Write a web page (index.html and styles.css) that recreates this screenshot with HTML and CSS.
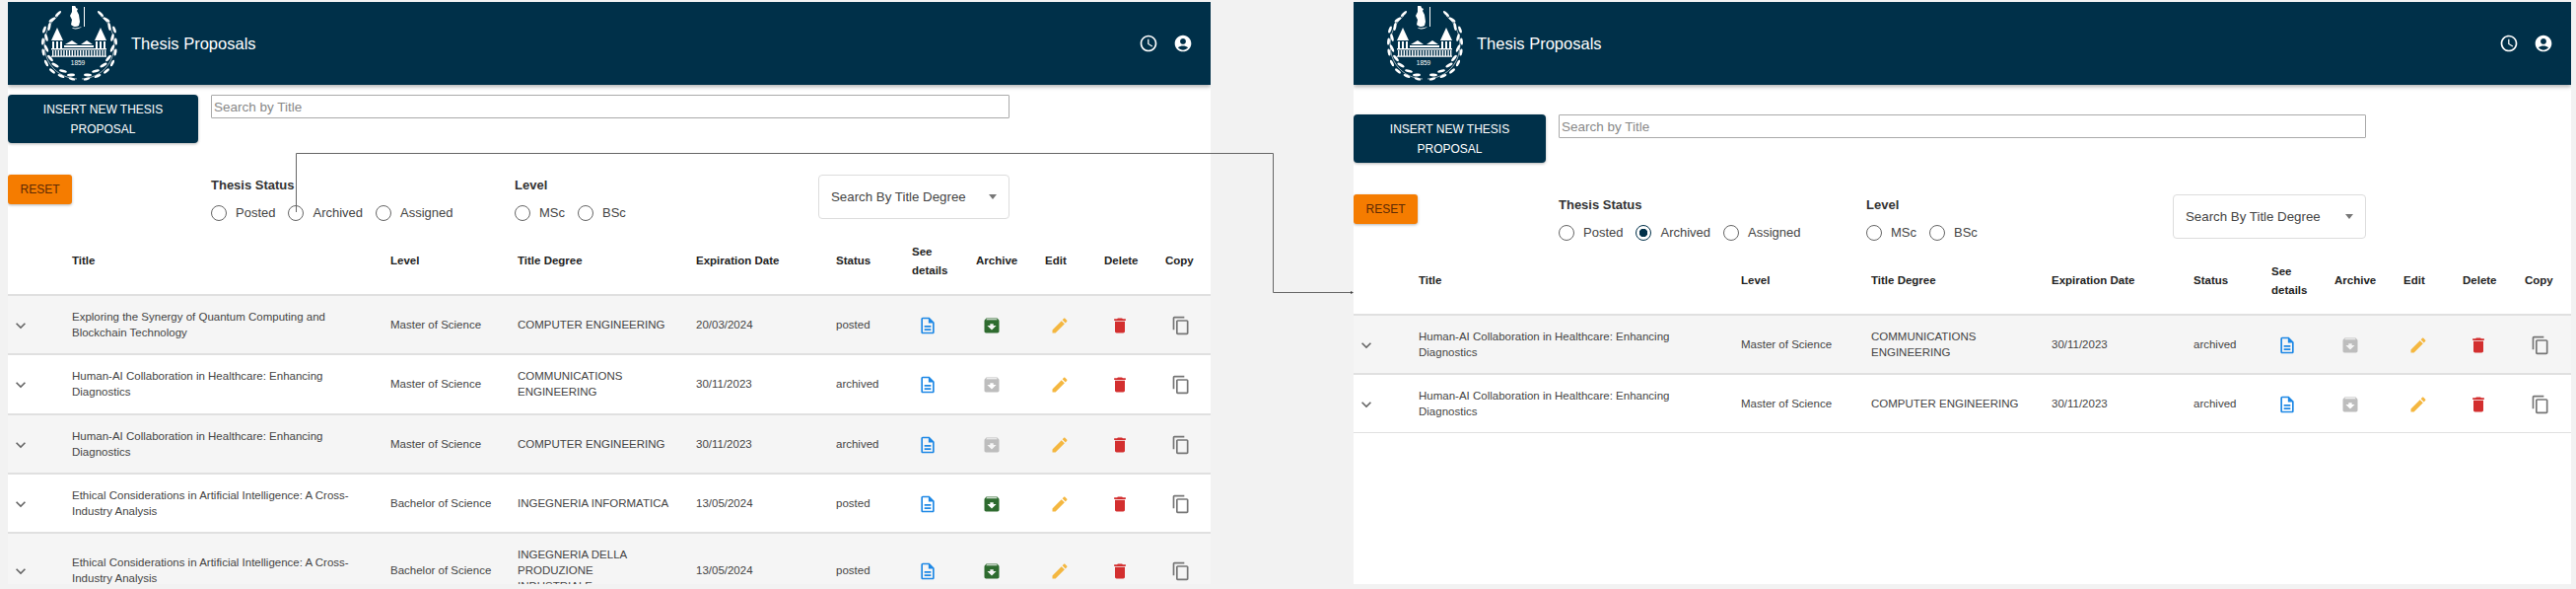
FILE: index.html
```html
<!DOCTYPE html>
<html>
<head lang="en">
    <meta charset="UTF-8">
    <title>Thesis Proposals</title>
    <link rel="stylesheet" href="styles.css">
</head>
<body>
<svg class="sprite" xmlns="http://www.w3.org/2000/svg">
    <symbol id="i-clock" viewBox="0 0 24 24"><path d="M11.99 2C6.47 2 2 6.48 2 12s4.47 10 9.99 10C17.52 22 22 17.52 22 12S17.52 2 11.99 2zM12 20c-4.42 0-8-3.58-8-8s3.58-8 8-8 8 3.58 8 8-3.58 8-8 8zm.5-13H11v6l5.25 3.15.75-1.23-4.5-2.67z"/></symbol>
    <symbol id="i-user" viewBox="0 0 24 24"><path d="M12 2C6.48 2 2 6.48 2 12s4.48 10 10 10 10-4.48 10-10S17.52 2 12 2zm0 4c1.93 0 3.5 1.57 3.5 3.5S13.93 13 12 13s-3.5-1.57-3.5-3.5S10.07 6 12 6zm0 14c-2.03 0-4.43-.82-6.14-2.88C7.55 15.8 9.68 15 12 15s4.45.8 6.14 2.12C16.43 19.18 14.03 20 12 20z"/></symbol>
    <symbol id="i-more" viewBox="0 0 24 24"><path d="M16.59 8.59 12 13.17 7.41 8.59 6 10l6 6 6-6z"/></symbol>
    <symbol id="i-file" viewBox="0 0 24 24"><path d="M8 16h8v2H8zm0-4h8v2H8zm6-10H6c-1.1 0-2 .9-2 2v16c0 1.1.89 2 1.99 2H18c1.1 0 2-.9 2-2V8l-6-6zm4 18H6V4h7v5h5v11z"/></symbol>
    <symbol id="i-archive" viewBox="0 0 24 24"><path d="M20.54 5.23l-1.39-1.68C18.88 3.21 18.47 3 18 3H6c-.47 0-.88.21-1.16.55L3.46 5.23C3.17 5.57 3 6.02 3 6.5V19c0 1.1.9 2 2 2h14c1.1 0 2-.9 2-2V6.5c0-.48-.17-.93-.46-1.27zM12 17.5L6.5 12H10v-2h4v2h3.5L12 17.5zM5.12 5l.81-1h12l.94 1H5.12z"/></symbol>
    <symbol id="i-edit" viewBox="0 0 24 24"><path d="M3 17.25V21h3.75L17.81 9.94l-3.75-3.75L3 17.25zM20.71 7.04c.39-.39.39-1.02 0-1.41l-2.34-2.34c-.39-.39-1.02-.39-1.41 0l-1.83 1.83 3.75 3.75 1.83-1.83z"/></symbol>
    <symbol id="i-delete" viewBox="0 0 24 24"><path d="M6 19c0 1.1.9 2 2 2h8c1.1 0 2-.9 2-2V7H6v12zM19 4h-3.5l-1-1h-5l-1 1H5v2h14V4z"/></symbol>
    <symbol id="i-copy" viewBox="0 0 24 24"><path d="M16 1H4c-1.1 0-2 .9-2 2v14h2V3h12V1zm3 4H8c-1.1 0-2 .9-2 2v14c0 1.1.9 2 2 2h11c1.1 0 2-.9 2-2V7c0-1.1-.9-2-2-2zm0 16H8V7h11v14z"/></symbol>
    <symbol id="i-logo" viewBox="0 0 80 76">
        <g id="wreath-side">
            <path class="logo-stem" d="M19 10C6 20 1 40 9 56c6 11 16 17 29 18"/>
            <ellipse cx="19" cy="8" rx="4" ry="1.3" transform="rotate(-45 19 8)"/>
            <ellipse cx="13" cy="14" rx="4" ry="1.4" transform="rotate(-35 13 14)"/>
            <ellipse cx="10" cy="21" rx="4" ry="1.4" transform="rotate(-80 10 21)"/>
            <ellipse cx="5" cy="24" rx="3.6" ry="1.4" transform="rotate(-70 5 24)"/>
            <ellipse cx="7" cy="32" rx="4" ry="1.4" transform="rotate(75 7 32)"/>
            <ellipse cx="3.500" cy="36" rx="3.6" ry="1.4" transform="rotate(-85 3.500 36)"/>
            <ellipse cx="7" cy="43" rx="4" ry="1.4" transform="rotate(65 7 43)"/>
            <ellipse cx="4" cy="47" rx="3.6" ry="1.4" transform="rotate(80 4 47)"/>
            <ellipse cx="11" cy="53" rx="4" ry="1.4" transform="rotate(50 11 53)"/>
            <ellipse cx="7" cy="58" rx="3.6" ry="1.4" transform="rotate(65 7 58)"/>
            <ellipse cx="16" cy="60" rx="4" ry="1.4" transform="rotate(30 16 60)"/>
            <ellipse cx="13" cy="66" rx="3.6" ry="1.4" transform="rotate(40 13 66)"/>
            <ellipse cx="24" cy="66" rx="4" ry="1.4" transform="rotate(15 24 66)"/>
            <ellipse cx="22" cy="71" rx="3.6" ry="1.4" transform="rotate(25 22 71)"/>
            <ellipse cx="32" cy="70" rx="4" ry="1.4" transform="rotate(-5 32 70)"/>
            <ellipse cx="33" cy="74" rx="3.4" ry="1.3" transform="rotate(15 33 74)"/>
        </g>
        <use href="#wreath-side" transform="translate(81 0) scale(-1 1)"/>
        <path d="M33 0c2-1 4 0 4 2l2 1-1 2 2 4 1 7-1 4c-3 2-6 1-8-1l1-5-2-4 2-4z"/>
        <path d="M45 1h1v20h-1zM43 21c-2 2-6 3-9 2l-1-1c4 1 7 0 10-1z"/>
        <path d="M18 22l6 13H12zM62 22l6 13H56z"/>
        <path d="M13 36h2v7h-2zM17 36h2v7h-2zM21 36h2v7h-2zM57 36h2v7h-2zM61 36h2v7h-2zM65 36h2v7h-2z"/>
        <path d="M26 39l7-4 6 4zM42 39l6-4 6 4zM25 40h30v2H25z"/>
        <path d="M12 43h56v1.500H12zM13 45h1.400v6H13zM15.800 45h1.400v6h-1.400zM18.600 45h1.400v6h-1.400zM21.400 45h1.400v6h-1.400zM24.200 45h1.400v6h-1.400zM27 45h1.400v6H27zM29.800 45h1.400v6h-1.400zM32.600 45h1.400v6h-1.400zM35.400 45h1.400v6h-1.400zM38.200 45h1.400v6h-1.400zM41 45h1.400v6H41zM43.800 45h1.400v6h-1.400zM46.600 45h1.400v6h-1.400zM49.400 45h1.400v6h-1.400zM52.200 45h1.400v6h-1.400zM55 45h1.400v6H55zM57.800 45h1.400v6h-1.400zM60.600 45h1.400v6h-1.400zM63.400 45h1.400v6h-1.400zM66 45h1.400v6H66zM12 50.500h56v1.200H12z"/>
        <text class="logo-year" x="39" y="60" text-anchor="middle">1859</text>
    </symbol>
</svg>

<div class="panel panel-left">
    <header class="topbar">
        <svg class="logo"><use href="#i-logo"/></svg>
        <span class="topbar-title">Thesis Proposals</span>
        <svg class="topbar-icon"><use href="#i-clock"/></svg>
        <svg class="topbar-icon"><use href="#i-user"/></svg>
    </header>

    <div class="tools">
        <button class="btn-insert">Insert new thesis proposal</button>
        <input class="search" type="text" placeholder="Search by Title">
    </div>

    <div class="tools filters">
        <button class="btn-reset">Reset</button>
        <div class="filter-row">
            <div>
                <div class="filter-title">Thesis Status</div>
                <div class="radios">
                    <label><input type="radio" name="status1">Posted</label>
                    <label><input type="radio" name="status1">Archived</label>
                    <label><input type="radio" name="status1">Assigned</label>
                </div>
            </div>
            <div>
                <div class="filter-title">Level</div>
                <div class="radios">
                    <label><input type="radio" name="level1">MSc</label>
                    <label><input type="radio" name="level1">BSc</label>
                </div>
            </div>
            <div class="select">Search By Title Degree<span class="select-arrow"></span></div>
        </div>
    </div>

    <table class="list">
        <colgroup><col><col><col><col><col><col><col><col><col><col><col></colgroup>
        <thead>
        <tr><th></th><th>Title</th><th>Level</th><th>Title Degree</th><th>Expiration Date</th><th>Status</th><th>See<br>details</th><th>Archive</th><th>Edit</th><th>Delete</th><th>Copy</th></tr>
        </thead>
        <tbody>
        <tr>
            <td><svg class="ico more"><use href="#i-more"/></svg></td>
            <td>Exploring the Synergy of Quantum Computing and Blockchain Technology</td>
            <td>Master of Science</td><td>COMPUTER ENGINEERING</td><td>20/03/2024</td><td>posted</td>
            <td><svg class="ico file"><use href="#i-file"/></svg></td>
            <td><svg class="ico arch"><use href="#i-archive"/></svg></td>
            <td><svg class="ico edit"><use href="#i-edit"/></svg></td>
            <td><svg class="ico del"><use href="#i-delete"/></svg></td>
            <td><svg class="ico copy"><use href="#i-copy"/></svg></td>
        </tr>
        <tr>
            <td><svg class="ico more"><use href="#i-more"/></svg></td>
            <td>Human-AI Collaboration in Healthcare: Enhancing Diagnostics</td>
            <td>Master of Science</td><td>COMMUNICATIONS ENGINEERING</td><td>30/11/2023</td><td>archived</td>
            <td><svg class="ico file"><use href="#i-file"/></svg></td>
            <td><svg class="ico arch off"><use href="#i-archive"/></svg></td>
            <td><svg class="ico edit"><use href="#i-edit"/></svg></td>
            <td><svg class="ico del"><use href="#i-delete"/></svg></td>
            <td><svg class="ico copy"><use href="#i-copy"/></svg></td>
        </tr>
        <tr>
            <td><svg class="ico more"><use href="#i-more"/></svg></td>
            <td>Human-AI Collaboration in Healthcare: Enhancing Diagnostics</td>
            <td>Master of Science</td><td>COMPUTER ENGINEERING</td><td>30/11/2023</td><td>archived</td>
            <td><svg class="ico file"><use href="#i-file"/></svg></td>
            <td><svg class="ico arch off"><use href="#i-archive"/></svg></td>
            <td><svg class="ico edit"><use href="#i-edit"/></svg></td>
            <td><svg class="ico del"><use href="#i-delete"/></svg></td>
            <td><svg class="ico copy"><use href="#i-copy"/></svg></td>
        </tr>
        <tr>
            <td><svg class="ico more"><use href="#i-more"/></svg></td>
            <td>Ethical Considerations in Artificial Intelligence: A Cross-Industry Analysis</td>
            <td>Bachelor of Science</td><td>INGEGNERIA INFORMATICA</td><td>13/05/2024</td><td>posted</td>
            <td><svg class="ico file"><use href="#i-file"/></svg></td>
            <td><svg class="ico arch"><use href="#i-archive"/></svg></td>
            <td><svg class="ico edit"><use href="#i-edit"/></svg></td>
            <td><svg class="ico del"><use href="#i-delete"/></svg></td>
            <td><svg class="ico copy"><use href="#i-copy"/></svg></td>
        </tr>
        <tr>
            <td><svg class="ico more"><use href="#i-more"/></svg></td>
            <td>Ethical Considerations in Artificial Intelligence: A Cross-Industry Analysis</td>
            <td>Bachelor of Science</td><td>INGEGNERIA DELLA PRODUZIONE INDUSTRIALE</td><td>13/05/2024</td><td>posted</td>
            <td><svg class="ico file"><use href="#i-file"/></svg></td>
            <td><svg class="ico arch"><use href="#i-archive"/></svg></td>
            <td><svg class="ico edit"><use href="#i-edit"/></svg></td>
            <td><svg class="ico del"><use href="#i-delete"/></svg></td>
            <td><svg class="ico copy"><use href="#i-copy"/></svg></td>
        </tr>
        </tbody>
    </table>
</div>

<div class="panel panel-right">
    <header class="topbar">
        <svg class="logo"><use href="#i-logo"/></svg>
        <span class="topbar-title">Thesis Proposals</span>
        <svg class="topbar-icon"><use href="#i-clock"/></svg>
        <svg class="topbar-icon"><use href="#i-user"/></svg>
    </header>

    <div class="tools">
        <button class="btn-insert">Insert new thesis proposal</button>
        <input class="search" type="text" placeholder="Search by Title">
    </div>

    <div class="tools filters">
        <button class="btn-reset">Reset</button>
        <div class="filter-row">
            <div>
                <div class="filter-title">Thesis Status</div>
                <div class="radios">
                    <label><input type="radio" name="status2">Posted</label>
                    <label><input type="radio" name="status2" checked>Archived</label>
                    <label><input type="radio" name="status2">Assigned</label>
                </div>
            </div>
            <div>
                <div class="filter-title">Level</div>
                <div class="radios">
                    <label><input type="radio" name="level2">MSc</label>
                    <label><input type="radio" name="level2">BSc</label>
                </div>
            </div>
            <div class="select">Search By Title Degree<span class="select-arrow"></span></div>
        </div>
    </div>

    <table class="list">
        <colgroup><col><col><col><col><col><col><col><col><col><col><col></colgroup>
        <thead>
        <tr><th></th><th>Title</th><th>Level</th><th>Title Degree</th><th>Expiration Date</th><th>Status</th><th>See<br>details</th><th>Archive</th><th>Edit</th><th>Delete</th><th>Copy</th></tr>
        </thead>
        <tbody>
        <tr>
            <td><svg class="ico more"><use href="#i-more"/></svg></td>
            <td>Human-AI Collaboration in Healthcare: Enhancing Diagnostics</td>
            <td>Master of Science</td><td>COMMUNICATIONS ENGINEERING</td><td>30/11/2023</td><td>archived</td>
            <td><svg class="ico file"><use href="#i-file"/></svg></td>
            <td><svg class="ico arch off"><use href="#i-archive"/></svg></td>
            <td><svg class="ico edit"><use href="#i-edit"/></svg></td>
            <td><svg class="ico del"><use href="#i-delete"/></svg></td>
            <td><svg class="ico copy"><use href="#i-copy"/></svg></td>
        </tr>
        <tr>
            <td><svg class="ico more"><use href="#i-more"/></svg></td>
            <td>Human-AI Collaboration in Healthcare: Enhancing Diagnostics</td>
            <td>Master of Science</td><td>COMPUTER ENGINEERING</td><td>30/11/2023</td><td>archived</td>
            <td><svg class="ico file"><use href="#i-file"/></svg></td>
            <td><svg class="ico arch off"><use href="#i-archive"/></svg></td>
            <td><svg class="ico edit"><use href="#i-edit"/></svg></td>
            <td><svg class="ico del"><use href="#i-delete"/></svg></td>
            <td><svg class="ico copy"><use href="#i-copy"/></svg></td>
        </tr>
        </tbody>
    </table>
</div>

<!-- arrow between the two screens -->
<svg class="connector" xmlns="http://www.w3.org/2000/svg">
    <path d="M300.5 215V155.5H1291.5V296.5H1371"/>
    <path class="connector-tip" d="M1370 295l3 1.500-3 1.500z"/>
</svg>
</body>
</html>
```

FILE: styles.css
```css
* {
    margin: 0;
    padding: 0;
    box-sizing: border-box;
}

html, body {
    height: 597px;
    overflow: hidden;
}

body {
    position: relative;
    display: flex;
    align-items: flex-start;
    gap: 145px;
    padding: 2px 5px 5px 8px;
    background: #f2f2f2;
    font-family: "Liberation Sans", Arial, sans-serif;
    color: #333;
}

.sprite {
    display: none;
}

/* each screen */
.panel {
    height: 590px;
    overflow: hidden;
    background: #fff;
}

.panel-left {
    width: 1220px;
}

.panel-right {
    width: 1235px;
}

/* top bar */
.topbar {
    display: flex;
    align-items: center;
    height: 84px;
    padding: 0 18px 0 32px;
    background: #003049;
    color: #fff;
    box-shadow: 0 2px 4px rgba(0, 0, 0, .3);
}

.logo {
    width: 80px;
    height: 76px;
    fill: #fff;
}

.logo-stem {
    fill: none;
    stroke: #fff;
    stroke-width: .6;
}

.logo-year {
    font-family: "Liberation Sans", sans-serif;
    font-size: 6.500px;
}

.topbar-title {
    margin-left: 13px;
    margin-right: auto;
    font-size: 16.500px;
}

.topbar-icon {
    width: 20px;
    height: 20px;
    margin-left: 15px;
    fill: #fff;
}

/* insert + search */
.tools {
    display: grid;
    grid-template-columns: 193px 810px;
    column-gap: 13px;
    align-items: start;
    margin-top: 10px;
}

.panel-right .tools {
    grid-template-columns: 195px 819px;
    margin-top: 30px;
}

.btn-insert {
    height: 49px;
    padding: 0 30px;
    border: 0;
    border-radius: 4px;
    background: #003049;
    color: #fff;
    font-family: inherit;
    font-size: 12px;
    line-height: 20px;
    text-transform: uppercase;
    box-shadow: 0 1px 3px rgba(0, 0, 0, .3);
}

.search {
    width: 100%;
    height: 24px;
    padding: 0 2px;
    border: 1px solid #aaa;
    border-radius: 1px;
    font-family: inherit;
    font-size: 13.500px;
}

.search::placeholder {
    color: #888;
}

/* filter row */
.panel-left .filters,
.panel-right .filters {
    margin-top: 32px;
}

.btn-reset {
    width: 65px;
    height: 30px;
    border: 0;
    border-radius: 3px;
    background: #f57c00;
    color: #5c2a05;
    font-family: inherit;
    font-size: 12px;
    text-transform: uppercase;
    box-shadow: 0 1px 3px rgba(0, 0, 0, .3);
}

.filter-row {
    display: grid;
    grid-template-columns: 308px 308px 194px;
    height: 45px;
}

.panel-right .filter-row {
    grid-template-columns: 312px 311px 196px;
}

.filter-title {
    margin-top: 1px;
    font-size: 13px;
    font-weight: 700;
    line-height: 20px;
}

.radios {
    display: flex;
    gap: 13px;
    margin-top: 10px;
}

.radios label {
    display: flex;
    align-items: center;
    gap: 9px;
    font-size: 13px;
    line-height: 16px;
    color: #444;
}

.radios input {
    appearance: none;
    width: 16px;
    height: 16px;
    border: 1.500px solid #666;
    border-radius: 50%;
    background: #fff;
}

.radios input:checked {
    border-color: #003049;
    background: radial-gradient(circle, #003049 0, #003049 4px, #fff 4.500px);
}

.select {
    display: flex;
    align-items: center;
    justify-content: space-between;
    height: 45px;
    padding: 0 12px;
    border: 1px solid #ddd;
    border-radius: 4px;
    font-size: 13.300px;
    color: #444;
}

.select-arrow {
    width: 0;
    height: 0;
    border: 4px solid transparent;
    border-top: 5px solid #777;
    border-bottom: 0;
}

/* table */
.list {
    width: 100%;
    margin-top: 10px;
    border-collapse: separate;
    border-spacing: 0;
    table-layout: fixed;
    font-size: 11.500px;
    line-height: 16px;
}

.panel-left col:nth-child(1) { width: 65px; }
.panel-left col:nth-child(2) { width: 323px; }
.panel-left col:nth-child(3) { width: 129px; }
.panel-left col:nth-child(4) { width: 181px; }
.panel-left col:nth-child(5) { width: 142px; }
.panel-left col:nth-child(6) { width: 77px; }
.panel-left col:nth-child(7) { width: 65px; }
.panel-left col:nth-child(8) { width: 70px; }
.panel-left col:nth-child(9) { width: 60px; }
.panel-left col:nth-child(10) { width: 62px; }
.panel-left col:nth-child(11) { width: 46px; }

.panel-right col:nth-child(1) { width: 66px; }
.panel-right col:nth-child(2) { width: 327px; }
.panel-right col:nth-child(3) { width: 132px; }
.panel-right col:nth-child(4) { width: 183px; }
.panel-right col:nth-child(5) { width: 144px; }
.panel-right col:nth-child(6) { width: 79px; }
.panel-right col:nth-child(7) { width: 64px; }
.panel-right col:nth-child(8) { width: 70px; }
.panel-right col:nth-child(9) { width: 60px; }
.panel-right col:nth-child(10) { width: 63px; }
.panel-right col:nth-child(11) { width: 47px; }

.list th {
    height: 68px;
    border-bottom: 2px solid #e0e0e0;
    font-weight: 700;
    line-height: 19.500px;
    text-align: left;
    color: #222;
}

.list td {
    height: 60.250px;
    padding: 13px 20px 13px 0;
    border-bottom: 2px solid #e0e0e0;
    color: #444;
}

/* degree names wrap earlier than the other columns */
.list td:nth-child(3) {
    padding-right: 10px;
}

.list td:nth-child(4) {
    padding-right: 27px;
}

.list tbody tr:nth-child(odd) td {
    background: #f5f5f5;
}

.panel-right tbody tr:last-child td {
    height: 59px;
    border-bottom-width: 1px;
}

/* row icons */
.ico {
    display: block;
    width: 20px;
    height: 20px;
    margin-top: 2px;
    margin-left: 6px;
}

.more { margin-left: 3px; fill: #666; }
.file { fill: #1e88e5; }
.arch { fill: #2e6b2f; }
.arch.off { fill: #bdbdbd; }
.edit { fill: #f4b740; margin-left: 5px; }
.del { fill: #d32f2f; }
.copy { fill: #757575; }

/* arrow over both screens */
.connector {
    position: absolute;
    left: 0;
    top: 0;
    width: 2613px;
    height: 597px;
    fill: none;
    stroke: #666;
    stroke-width: 1;
    pointer-events: none;
}

.connector-tip {
    fill: #444;
    stroke: none;
}
```
